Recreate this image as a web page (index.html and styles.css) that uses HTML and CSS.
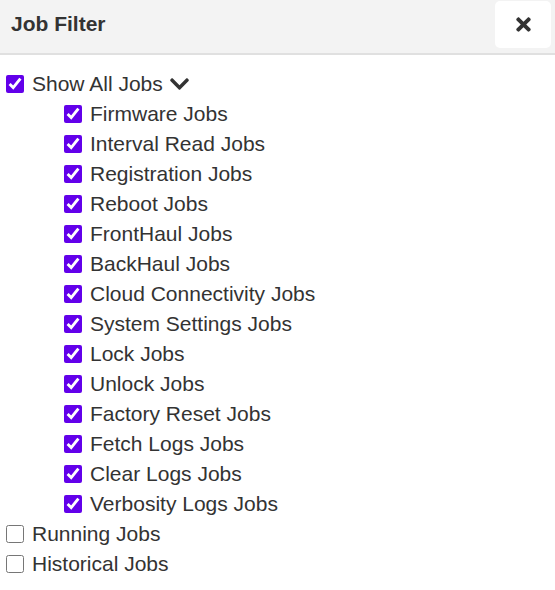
FILE: index.html
```html
<!DOCTYPE html>
<html>
<head>
<meta charset="utf-8">
<link rel="stylesheet" href="styles.css">
</head>
<body>
<div class="panel">
  <div class="header">
    <div class="title">Job Filter</div>
    <button class="close" aria-label="Close">
      <svg width="21" height="21" viewBox="0 0 352 512"><path fill="#333" d="M242.72 256l100.07-100.07c12.280-12.28 12.28-32.19 0-44.48l-22.24-22.24c-12.28-12.28-32.19-12.28-44.48 0L176 189.28 75.93 89.21c-12.28-12.28-32.19-12.28-44.48 0L9.21 111.450c-12.28 12.28-12.28 32.19 0 44.48L109.28 256 9.21 356.07c-12.28 12.28-12.28 32.19 0 44.48l22.24 22.24c12.28 12.28 32.2 12.28 44.48 0L176 322.72l100.07 100.07c12.28 12.28 32.2 12.28 44.48 0l22.24-22.24c12.28-12.28 12.28-32.19 0-44.48L242.72 256z"/></svg>
    </button>
  </div>
  <div class="list">
    <label class="row"><input type="checkbox" checked><span>Show All Jobs</span>
      <svg class="chev" width="21" height="22" viewBox="0 0 448 512"><path fill="#333" d="M207.029 381.476L12.686 187.132c-9.373-9.373-9.373-24.569 0-33.941l22.667-22.667c9.357-9.357 24.522-9.375 33.901-.04L224 284.505l154.745-154.021c9.379-9.335 24.544-9.317 33.901.04l22.667 22.667c9.373 9.373 9.373 24.569 0 33.941L240.971 381.476c-9.373 9.372-24.569 9.372-33.942 0z"/></svg>
    </label>
    <div class="sub">
      <label class="row"><input type="checkbox" checked><span>Firmware Jobs</span></label>
      <label class="row"><input type="checkbox" checked><span>Interval Read Jobs</span></label>
      <label class="row"><input type="checkbox" checked><span>Registration Jobs</span></label>
      <label class="row"><input type="checkbox" checked><span>Reboot Jobs</span></label>
      <label class="row"><input type="checkbox" checked><span>FrontHaul Jobs</span></label>
      <label class="row"><input type="checkbox" checked><span>BackHaul Jobs</span></label>
      <label class="row"><input type="checkbox" checked><span>Cloud Connectivity Jobs</span></label>
      <label class="row"><input type="checkbox" checked><span>System Settings Jobs</span></label>
      <label class="row"><input type="checkbox" checked><span>Lock Jobs</span></label>
      <label class="row"><input type="checkbox" checked><span>Unlock Jobs</span></label>
      <label class="row"><input type="checkbox" checked><span>Factory Reset Jobs</span></label>
      <label class="row"><input type="checkbox" checked><span>Fetch Logs Jobs</span></label>
      <label class="row"><input type="checkbox" checked><span>Clear Logs Jobs</span></label>
      <label class="row"><input type="checkbox" checked><span>Verbosity Logs Jobs</span></label>
    </div>
    <label class="row"><input type="checkbox"><span>Running Jobs</span></label>
    <label class="row"><input type="checkbox"><span>Historical Jobs</span></label>
  </div>
</div>
</body>
</html>
```

FILE: styles.css
```css
html, body {
  margin: 0;
  padding: 0;
  background: #fff;
}
body {
  font-family: "Liberation Sans", Arial, sans-serif;
  color: #333;
}
.panel {
  width: 555px;
}
.header {
  height: 53px;
  background: #f3f3f3;
  border-bottom: 2px solid #e0e0e0;
  display: flex;
  align-items: flex-start;
  justify-content: space-between;
}
.title {
  font-weight: bold;
  font-size: 21px;
  padding: 12px 0 0 11px;
  line-height: 24px;
}
.close {
  margin: 1px 4px 0 0;
  width: 56px;
  height: 47px;
  background: #fff;
  border: none;
  border-radius: 5px;
  display: flex;
  align-items: center;
  justify-content: center;
  padding: 0;
}
.list {
  padding-top: 14px;
  display: flex;
  flex-direction: column;
}
.sub {
  display: flex;
  flex-direction: column;
  padding-left: 64px;
}
.row {
  display: flex;
  align-items: center;
  height: 30px;
  font-size: 21px;
  padding-left: 6px;
}
.sub .row {
  padding-left: 0;
}
.row input {
  width: 18px;
  height: 18px;
  margin: 0 8px 0 0;
  accent-color: #6200ea;
}
.chev {
  margin-left: 6px;
}
```
